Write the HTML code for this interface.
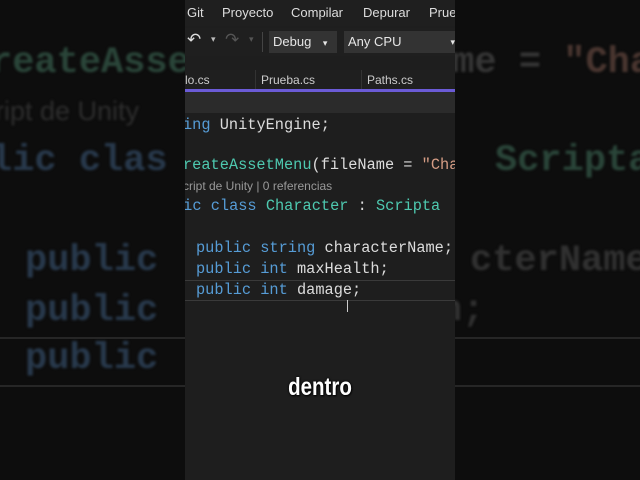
<!DOCTYPE html>
<html><head><meta charset="utf-8"><style>
body{margin:0;width:640px;height:480px;overflow:hidden;background:#0d0d0d;position:relative;font-family:"Liberation Sans",sans-serif}
.bg{position:absolute;left:0;top:0;width:640px;height:480px;filter:blur(1.2px);font-family:"Liberation Mono",monospace;font-size:37px;font-weight:bold;white-space:pre;color:#28394c}
.bg div{position:absolute}
.hl{position:absolute;left:0;width:640px;top:337px;height:46px;border-top:2px solid #262626;border-bottom:2px solid #262626}
.strip{position:absolute;left:185px;top:0;width:270px;height:480px;background:#1e1e1e;overflow:hidden}
.menu{position:absolute;top:0;height:26px;width:270px;background:#1f1f1f;color:#ddd;font-size:13px}
.menu span{position:absolute;top:5px}
.tb{position:absolute;top:28px;height:28px;width:270px;background:#1f1f1f}
.box{position:absolute;top:31px;height:22px;background:#333;color:#e6e6e6;font-size:13px;line-height:22px;padding-left:4px;box-sizing:border-box}
.tabs{position:absolute;top:70px;height:20px;width:270px;background:#1f1f1f;color:#ccc;font-size:12px}
.tabs span{position:absolute;top:3px}
.code{position:absolute;font-family:"Liberation Mono",monospace;font-size:15.3px;white-space:pre;color:#dcdcdc}
.k{color:#569cd6}.t{color:#4ec9b0}.s{color:#d69d85}
</style></head><body>
<div class="bg">
<div style="left:-10px;top:42px;color:#2a4539">reateAsset</div>
<div style="left:430px;top:42px;color:#363636">ame = <span style="color:#4a3630">"Cha</span></div>
<div style="left:-5px;top:96px;font-size:27px;font-weight:normal;color:#2e2e2e;font-family:'Liberation Sans'">ript de Unity</div>
<div style="left:-10px;top:140px">lic clas</div>
<div style="left:495px;top:140px;color:#2a4539">Scripta</div>
<div style="left:25px;top:240px">public</div>
<div style="left:470px;top:240px;color:#313131">cterName;</div>
<div style="left:25px;top:290px">public</div>
<div style="left:440px;top:290px;color:#313131">h;</div>
<div style="left:25px;top:338px">public</div>
</div>
<div class="hl"></div>
<div class="strip">
<div class="menu"><span style="left:2px">Git</span><span style="left:37px">Proyecto</span><span style="left:106px">Compilar</span><span style="left:178px">Depurar</span><span style="left:244px">Prueb</span></div>
<div class="tb"><span style="position:absolute;left:2px;top:2px;color:#ddd;font-size:17px">↶</span><span style="position:absolute;left:26px;top:6px;color:#bbb;font-size:9px">▾</span><span style="position:absolute;left:40px;top:2px;color:#555;font-size:17px">↷</span><span style="position:absolute;left:64px;top:6px;color:#555;font-size:9px">▾</span><div style="position:absolute;left:77px;top:4px;width:1px;height:20px;background:#444"></div></div>
<div class="box" style="left:84px;width:68px">Debug <span style="font-size:9px;margin-left:8px">▾</span></div>
<div class="box" style="left:159px;width:111px">Any CPU<span style="position:absolute;right:0;font-size:9px">▾</span></div>
<div class="tabs"><span style="left:0">lo.cs</span><div style="position:absolute;left:70px;top:0;width:1px;height:20px;background:#333"></div><span style="left:76px">Prueba.cs</span><div style="position:absolute;left:176px;top:0;width:1px;height:20px;background:#333"></div><span style="left:182px">Paths.cs</span></div>
<div style="position:absolute;top:89px;height:3px;width:270px;background:#6b5bd6"></div>
<div style="position:absolute;top:92px;height:21px;width:270px;background:#2b2b2b"></div>
<div style="position:absolute;top:280px;height:19px;width:270px;border-top:1px solid #3a3a3a;border-bottom:1px solid #3a3a3a"></div>
<div class="code" style="left:-2px;top:116px"><span class="k">ing</span> UnityEngine;</div>
<div class="code" style="left:-2px;top:156px"><span class="t">reateAssetMenu</span>(fileName = <span class="s">"Cha</span></div>
<div style="position:absolute;left:-2px;top:179px;font-size:12px;color:#999">cript de Unity | 0 referencias</div>
<div class="code" style="left:-11px;top:197px"><span class="k">lic class</span> <span class="t">Character</span> : <span class="t">Scripta</span></div>
<div class="code" style="left:11px;top:239px"><span class="k">public string</span> characterName;</div>
<div class="code" style="left:11px;top:260px"><span class="k">public int</span> maxHealth;</div>
<div class="code" style="left:11px;top:281px"><span class="k">public int</span> damage;</div>
<div style="position:absolute;left:162px;top:300px;width:1px;height:12px;background:#ccc"></div>
<div style="position:absolute;left:0;width:270px;top:373px;text-align:center;color:#fff;font-weight:bold;font-size:25px;transform:scaleX(.82);text-shadow:0 0 3px #000,1px 1px 2px #000">dentro</div>
</div>
</body></html>
